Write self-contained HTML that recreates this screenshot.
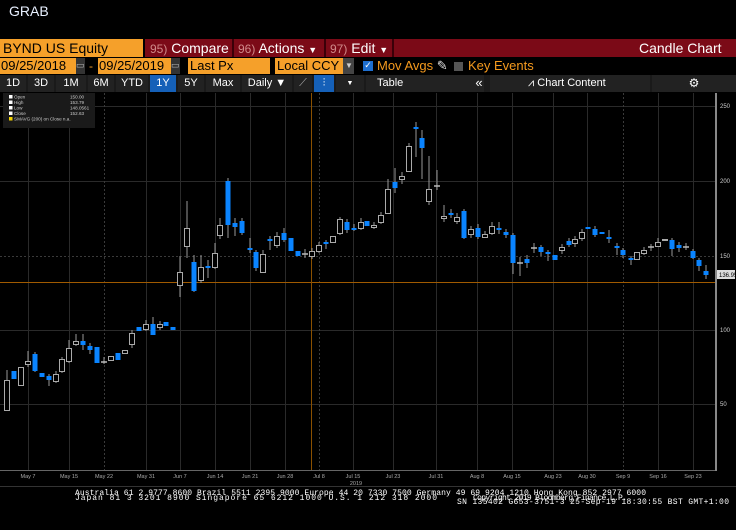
<!DOCTYPE html>
<html><head><meta charset="utf-8">
<style>
*{margin:0;padding:0;box-sizing:border-box}
body{width:736px;height:530px;background:#000;overflow:hidden;position:relative;font-family:"Liberation Sans",sans-serif;color:#fff}
.a{position:absolute;white-space:nowrap;line-height:1}
.t{font-size:14px}
.or{background:#f5a02a;color:#000}
.red{background:#7b0a17}
.dk{background:#222;color:#fff;font-size:11px;text-align:center;height:17px;top:75px;padding-top:3px}
.num{color:#d08a8a;font-size:12px}
</style></head><body>
<div class="a" style="left:9px;top:4px;font-size:14px;color:#e8f0ff">GRAB</div>

<!-- row1 -->
<div class="a or t" style="left:0;top:39px;width:143px;height:18px;padding:2px 0 0 3px">BYND US Equity</div>
<div class="a red" style="left:145px;top:39px;width:591px;height:18px"></div>
<div class="a t" style="left:150px;top:41px"><span class="num">95)</span> Compare</div>
<div class="a" style="left:232px;top:39px;width:2px;height:18px;background:#3a0008"></div>
<div class="a t" style="left:238px;top:41px"><span class="num">96)</span> Actions <span style="font-size:9px">▼</span></div>
<div class="a" style="left:324px;top:39px;width:2px;height:18px;background:#3a0008"></div>
<div class="a t" style="left:330px;top:41px"><span class="num">97)</span> Edit <span style="font-size:9px">▼</span></div>
<div class="a" style="left:392px;top:39px;width:2px;height:18px;background:#3a0008"></div>
<div class="a t" style="left:639px;top:41px">Candle Chart</div>

<!-- row2 -->
<div class="a or t" style="left:0;top:58px;width:76px;height:16px;padding:1px 0 0 1px;font-size:13px">09/25/2018</div>
<div class="a" style="left:76px;top:58px;width:9px;height:16px;background:#333;color:#bbb;font-size:9px;padding-top:3px">▭</div>
<div class="a" style="left:89px;top:60px;color:#f5a02a;font-size:12px">-</div>
<div class="a or t" style="left:98px;top:58px;width:73px;height:16px;padding:1px 0 0 1px;font-size:13px">09/25/2019</div>
<div class="a" style="left:171px;top:58px;width:9px;height:16px;background:#333;color:#bbb;font-size:9px;padding-top:3px">▭</div>
<div class="a or t" style="left:188px;top:58px;width:82px;height:16px;padding:1px 0 0 2px;font-size:13px">Last Px</div>
<div class="a or t" style="left:275px;top:58px;width:68px;height:16px;padding:1px 0 0 2px;font-size:13px">Local CCY</div>
<div class="a" style="left:343px;top:58px;width:11px;height:16px;background:#444;color:#ccc;font-size:8px;padding:4px 0 0 2px">▼</div>
<div class="a" style="left:363px;top:61px;width:10px;height:10px;background:#1e6fd0;color:#fff;font-size:9px;text-align:center">✓</div>
<div class="a" style="left:377px;top:59px;color:#f59a1e;font-size:13px">Mov Avgs <span style="color:#ddd">✎</span></div>
<div class="a" style="left:454px;top:62px;width:9px;height:9px;background:#555"></div>
<div class="a" style="left:468px;top:59px;color:#f59a1e;font-size:13px">Key Events</div>

<!-- row3 -->
<div class="a" style="left:0;top:75px;width:736px;height:17px;background:#1a1a1a"></div>
<div class="a dk" style="left:0;width:26px">1D</div>
<div class="a dk" style="left:28px;width:26px">3D</div>
<div class="a dk" style="left:56px;width:30px">1M</div>
<div class="a dk" style="left:88px;width:26px">6M</div>
<div class="a dk" style="left:116px;width:32px">YTD</div>
<div class="a dk" style="left:150px;width:26px;background:#1560b8">1Y</div>
<div class="a dk" style="left:178px;width:26px">5Y</div>
<div class="a dk" style="left:206px;width:34px">Max</div>
<div class="a dk" style="left:242px;width:50px">Daily ▼</div>
<div class="a dk" style="left:294px;width:18px;color:#aaa">⟋</div>
<div class="a dk" style="left:314px;width:20px;background:#1560b8">⫶</div>
<div class="a dk" style="left:336px;width:28px;font-size:7px;padding-top:5px">▼</div>
<div class="a dk" style="left:366px;width:118px;text-align:left;padding-left:11px">Table</div>
<div class="a dk" style="left:470px;width:18px;font-size:13px;padding-top:1px;background:transparent">«</div>
<div class="a dk" style="left:490px;width:160px;text-align:left;padding-left:38px">⩘ Chart Content</div>
<div class="a dk" style="left:652px;width:84px;font-size:12px;padding-top:2px">⚙</div>

<svg class="a" style="left:0;top:93px" width="736" height="437" viewBox="0 93 736 437">
<g stroke="#2a2a2a" stroke-width="1">
<line x1="0" y1="106.5" x2="715" y2="106.5"/><line x1="0" y1="181.5" x2="715" y2="181.5"/>
<line x1="0" y1="256.5" x2="715" y2="256.5" stroke-dasharray="2,2" stroke="#3a3a3a"/>
<line x1="0" y1="330.5" x2="715" y2="330.5"/><line x1="0" y1="404.5" x2="715" y2="404.5"/>
<line x1="28.5" y1="93" x2="28.5" y2="470"/><line x1="69.5" y1="93" x2="69.5" y2="470"/>
<line x1="104.5" y1="93" x2="104.5" y2="470" stroke-dasharray="2,2" stroke="#3a3a3a"/>
<line x1="146.5" y1="93" x2="146.5" y2="470"/><line x1="180.5" y1="93" x2="180.5" y2="470"/>
<line x1="215.5" y1="93" x2="215.5" y2="470"/><line x1="250.5" y1="93" x2="250.5" y2="470"/>
<line x1="285.5" y1="93" x2="285.5" y2="470"/>
<line x1="319.5" y1="93" x2="319.5" y2="470" stroke-dasharray="2,2" stroke="#3a3a3a"/>
<line x1="353.5" y1="93" x2="353.5" y2="470"/><line x1="393.5" y1="93" x2="393.5" y2="470"/>
<line x1="436.5" y1="93" x2="436.5" y2="470"/><line x1="477.5" y1="93" x2="477.5" y2="470"/>
<line x1="512.5" y1="93" x2="512.5" y2="470"/><line x1="553.5" y1="93" x2="553.5" y2="470"/>
<line x1="587.5" y1="93" x2="587.5" y2="470"/>
<line x1="623.5" y1="93" x2="623.5" y2="470" stroke-dasharray="2,2" stroke="#3a3a3a"/>
<line x1="658.5" y1="93" x2="658.5" y2="470"/><line x1="693.5" y1="93" x2="693.5" y2="470"/>
</g>
<line x1="0" y1="282.5" x2="715" y2="282.5" stroke="#a05a00"/>
<line x1="311.5" y1="93" x2="311.5" y2="470" stroke="#8a5000"/>
<line x1="0" y1="470.5" x2="716" y2="470.5" stroke="#666"/>
<line x1="716" y1="93" x2="716" y2="471" stroke="#888" stroke-width="2"/>
<g fill="#ccc" font-size="6" font-family="Liberation Sans">
<text x="720" y="108">250</text><text x="720" y="183">200</text><text x="720" y="258">150</text><text x="720" y="332">100</text><text x="720" y="406">50</text>
</g>
<rect x="717" y="270" width="18" height="9" fill="#ddd"/><text x="719" y="277" font-size="6" fill="#000" font-family="Liberation Sans">136.95</text>

<!-- wicks -->
<g stroke="#999" stroke-width="1">
<line x1="7" y1="370" x2="7" y2="410"/><line x1="28" y1="351" x2="28" y2="367"/><line x1="35" y1="352" x2="35" y2="372"/>
<line x1="49" y1="374" x2="49" y2="386"/><line x1="56" y1="371" x2="56" y2="383"/><line x1="62" y1="357" x2="62" y2="373"/>
<line x1="69" y1="340" x2="69" y2="363"/><line x1="76" y1="334" x2="76" y2="346"/><line x1="83" y1="334" x2="83" y2="350"/><line x1="90" y1="343" x2="90" y2="354"/>
<line x1="104" y1="357" x2="104" y2="364"/><line x1="132" y1="330" x2="132" y2="348"/><line x1="146" y1="320" x2="146" y2="331"/><line x1="153" y1="317" x2="153" y2="335"/><line x1="160" y1="321" x2="160" y2="330"/>
<line x1="180" y1="256" x2="180" y2="297"/><line x1="187" y1="201" x2="187" y2="258"/><line x1="194" y1="255" x2="194" y2="292"/><line x1="201" y1="255" x2="201" y2="283"/><line x1="208" y1="260" x2="208" y2="278"/><line x1="215" y1="243" x2="215" y2="269"/>
<line x1="220" y1="218" x2="220" y2="239"/><line x1="228" y1="178" x2="228" y2="238"/><line x1="235" y1="218" x2="235" y2="236"/><line x1="242" y1="218" x2="242" y2="235"/>
<line x1="250" y1="238" x2="250" y2="253"/><line x1="256" y1="250" x2="256" y2="271"/><line x1="263" y1="250" x2="263" y2="273"/><line x1="270" y1="236" x2="270" y2="250"/><line x1="277" y1="232" x2="277" y2="248"/><line x1="284" y1="228" x2="284" y2="242"/>
<line x1="305" y1="249" x2="305" y2="258"/><line x1="312" y1="248" x2="312" y2="259"/><line x1="319" y1="242" x2="319" y2="253"/><line x1="326" y1="240" x2="326" y2="249"/>
<line x1="340" y1="217" x2="340" y2="235"/><line x1="347" y1="219" x2="347" y2="233"/><line x1="354" y1="224" x2="354" y2="231"/><line x1="361" y1="218" x2="361" y2="230"/><line x1="374" y1="222" x2="374" y2="229"/><line x1="381" y1="212" x2="381" y2="224"/>
<line x1="388" y1="179" x2="388" y2="214"/><line x1="395" y1="168" x2="395" y2="193"/><line x1="402" y1="172" x2="402" y2="184"/><line x1="409" y1="143" x2="409" y2="172"/>
<line x1="416" y1="122" x2="416" y2="157"/><line x1="422" y1="130" x2="422" y2="179"/><line x1="429" y1="156" x2="429" y2="205"/><line x1="437" y1="170" x2="437" y2="190"/>
<line x1="444" y1="205" x2="444" y2="222"/><line x1="451" y1="209" x2="451" y2="218"/><line x1="457" y1="213" x2="457" y2="224"/><line x1="464" y1="209" x2="464" y2="239"/><line x1="471" y1="226" x2="471" y2="238"/><line x1="478" y1="224" x2="478" y2="239"/>
<line x1="485" y1="231" x2="485" y2="238"/><line x1="492" y1="222" x2="492" y2="235"/><line x1="499" y1="222" x2="499" y2="234"/><line x1="506" y1="229" x2="506" y2="238"/>
<line x1="513" y1="233" x2="513" y2="274"/><line x1="520" y1="257" x2="520" y2="276"/><line x1="527" y1="255" x2="527" y2="268"/><line x1="534" y1="243" x2="534" y2="253"/><line x1="541" y1="245" x2="541" y2="256"/><line x1="548" y1="250" x2="548" y2="261"/>
<line x1="562" y1="244" x2="562" y2="254"/><line x1="569" y1="238" x2="569" y2="247"/><line x1="575" y1="236" x2="575" y2="247"/><line x1="582" y1="229" x2="582" y2="241"/>
<line x1="595" y1="226" x2="595" y2="237"/><line x1="609" y1="230" x2="609" y2="243"/><line x1="617" y1="243" x2="617" y2="255"/><line x1="623" y1="248" x2="623" y2="258"/><line x1="631" y1="256" x2="631" y2="265"/>
<line x1="644" y1="247" x2="644" y2="255"/><line x1="651" y1="244" x2="651" y2="251"/><line x1="658" y1="238" x2="658" y2="247"/><line x1="672" y1="238" x2="672" y2="256"/><line x1="679" y1="242" x2="679" y2="252"/><line x1="686" y1="243" x2="686" y2="250"/>
<line x1="693" y1="249" x2="693" y2="259"/><line x1="699" y1="258" x2="699" y2="271"/><line x1="706" y1="265" x2="706" y2="279"/>
</g>
<!-- hollow bodies -->
<g fill="#000" stroke="#aaa" stroke-width="1">
<rect x="4.5" y="380.5" width="5" height="30"/><rect x="18.5" y="367.5" width="5" height="18"/><rect x="25.5" y="361.5" width="5" height="3"/>
<rect x="53.5" y="374.5" width="5" height="7"/><rect x="59.5" y="359.5" width="5" height="12"/><rect x="66.5" y="348.5" width="5" height="13"/><rect x="73.5" y="341.5" width="5" height="3"/>
<rect x="108.5" y="356.5" width="5" height="4"/><rect x="122.5" y="350.5" width="5" height="3"/><rect x="129.5" y="333.5" width="5" height="11"/><rect x="143.5" y="324.5" width="5" height="5"/><rect x="157.5" y="324.5" width="5" height="3"/>
<rect x="177.5" y="272.5" width="5" height="13"/><rect x="184.5" y="228.5" width="5" height="18"/><rect x="198.5" y="267.5" width="5" height="13"/><rect x="212.5" y="253.5" width="5" height="14"/><rect x="217.5" y="225.5" width="5" height="10"/>
<rect x="260.5" y="254.5" width="5" height="18"/><rect x="274.5" y="236.5" width="5" height="9"/><rect x="309.5" y="251.5" width="5" height="5"/><rect x="316.5" y="245.5" width="5" height="6"/>
<rect x="330.5" y="236.5" width="5" height="6"/><rect x="337.5" y="219.5" width="5" height="14"/><rect x="358.5" y="222.5" width="5" height="6"/><rect x="371.5" y="225.5" width="5" height="2"/><rect x="378.5" y="215.5" width="5" height="7"/>
<rect x="385.5" y="189.5" width="5" height="24"/><rect x="399.5" y="176.5" width="5" height="3"/><rect x="406.5" y="146.5" width="5" height="25"/><rect x="426.5" y="189.5" width="5" height="12"/>
<rect x="441.5" y="216.5" width="5" height="2"/><rect x="454.5" y="217.5" width="5" height="4"/><rect x="468.5" y="229.5" width="5" height="5"/>
<rect x="482.5" y="234.5" width="5" height="3"/><rect x="489.5" y="226.5" width="5" height="7"/><rect x="559.5" y="247.5" width="5" height="3"/><rect x="572.5" y="239.5" width="5" height="4"/><rect x="579.5" y="232.5" width="5" height="6"/>
<rect x="634.5" y="252.5" width="5" height="7"/><rect x="641.5" y="250.5" width="5" height="3"/><rect x="655.5" y="242.5" width="5" height="4"/><rect x="662.5" y="239.5" width="5" height="1"/>
</g>
<!-- dashes (neutral) -->
<g stroke="#bbb" stroke-width="1.5">
<line x1="101" y1="362" x2="107" y2="362"/><line x1="302" y1="254" x2="308" y2="254"/><line x1="434" y1="186" x2="440" y2="186"/><line x1="517" y1="263" x2="523" y2="263"/><line x1="531" y1="248" x2="537" y2="248"/><line x1="683" y1="247" x2="689" y2="247"/><line x1="648" y1="247" x2="654" y2="247"/>
</g>
<!-- blue bodies -->
<g fill="#0a84ff">
<rect x="11.5" y="371" width="5" height="8"/><rect x="32.5" y="354" width="5" height="17"/><rect x="39.5" y="373" width="5" height="4"/><rect x="46.5" y="376" width="5" height="4"/>
<rect x="80.5" y="341" width="5" height="4"/><rect x="87.5" y="346" width="5" height="4"/><rect x="94.5" y="347" width="5" height="16"/><rect x="115.5" y="353" width="5" height="7"/>
<rect x="136.5" y="327" width="5" height="4"/><rect x="150.5" y="324" width="5" height="11"/><rect x="163.5" y="322" width="5" height="4"/><rect x="170.5" y="327" width="5" height="3"/>
<rect x="191.5" y="262" width="5" height="29"/><rect x="205.5" y="266" width="5" height="2"/><rect x="225.5" y="181" width="5" height="44"/><rect x="232.5" y="223" width="5" height="4"/>
<rect x="239.5" y="221" width="5" height="12"/><rect x="247.5" y="248" width="5" height="2"/><rect x="253.5" y="252" width="5" height="16"/><rect x="267.5" y="239" width="5" height="2"/>
<rect x="281.5" y="233" width="5" height="7"/><rect x="288.5" y="238" width="5" height="13"/><rect x="295.5" y="251" width="5" height="5"/><rect x="323.5" y="242" width="5" height="2"/>
<rect x="344.5" y="222" width="5" height="8"/><rect x="351.5" y="228" width="5" height="2"/><rect x="364.5" y="221" width="5" height="5"/><rect x="392.5" y="182" width="5" height="6"/>
<rect x="413.5" y="127" width="5" height="2"/><rect x="419.5" y="138" width="5" height="10"/><rect x="448.5" y="213" width="5" height="2"/><rect x="461.5" y="211" width="5" height="27"/><rect x="475.5" y="228" width="5" height="9"/>
<rect x="496.5" y="228" width="5" height="2"/><rect x="503.5" y="232" width="5" height="3"/><rect x="510.5" y="235" width="5" height="28"/><rect x="524.5" y="259" width="5" height="4"/>
<rect x="538.5" y="247" width="5" height="5"/><rect x="545.5" y="252" width="5" height="2"/><rect x="552.5" y="255" width="5" height="5"/><rect x="566.5" y="241" width="5" height="4"/>
<rect x="585.5" y="227" width="5" height="2"/><rect x="592.5" y="229" width="5" height="6"/><rect x="599.5" y="232" width="5" height="2"/><rect x="606.5" y="237" width="5" height="2"/>
<rect x="614.5" y="246" width="5" height="2"/><rect x="620.5" y="250" width="5" height="5"/><rect x="628.5" y="258" width="5" height="2"/><rect x="669.5" y="240" width="5" height="9"/>
<rect x="676.5" y="245" width="5" height="3"/><rect x="690.5" y="251" width="5" height="7"/><rect x="696.5" y="260" width="5" height="6"/><rect x="703.5" y="271" width="5" height="4"/>
</g>

<!-- legend -->
<rect x="3" y="93" width="92" height="35" fill="#1a1a1a"/>
<g font-size="4.6" fill="#ccc" font-family="Liberation Sans">
<rect x="9" y="95" width="3.5" height="3.5" fill="#fff"/><text x="14" y="98.5">Open</text><text x="70" y="98.5">150.00</text>
<rect x="9" y="100.5" width="3.5" height="3.5" fill="#fff"/><text x="14" y="104">High</text><text x="70" y="104">153.79</text>
<rect x="9" y="106" width="3.5" height="3.5" fill="#fff"/><text x="14" y="109.5">Low</text><text x="70" y="109.5">148.0561</text>
<rect x="9" y="111.5" width="3.5" height="3.5" fill="#fff"/><text x="14" y="115">Close</text><text x="70" y="115">152.63</text>
<rect x="9" y="117" width="3.5" height="3.5" fill="#f0d000"/><text x="14" y="120.5">SMAVG (200)   on Close  n.a.</text>
</g>

<!-- x axis -->
<g font-size="5.5" fill="#aaa" font-family="Liberation Sans" text-anchor="middle">
<text x="28" y="478">May 7</text><text x="69" y="478">May 15</text><text x="104" y="478">May 22</text><text x="146" y="478">May 31</text><text x="180" y="478">Jun 7</text>
<text x="215" y="478">Jun 14</text><text x="250" y="478">Jun 21</text><text x="285" y="478">Jun 28</text><text x="319" y="478">Jul 8</text><text x="353" y="478">Jul 15</text>
<text x="393" y="478">Jul 23</text><text x="436" y="478">Jul 31</text><text x="477" y="478">Aug 8</text><text x="512" y="478">Aug 15</text><text x="553" y="478">Aug 23</text>
<text x="587" y="478">Aug 30</text><text x="623" y="478">Sep 9</text><text x="658" y="478">Sep 16</text><text x="693" y="478">Sep 23</text>
<text x="356" y="485">2019</text>
</g>
<line x1="0" y1="486.5" x2="736" y2="486.5" stroke="#333"/>
<g font-size="8" fill="#fff" font-family="Liberation Mono">
<text x="75" y="495" textLength="571">Australia 61 2 9777 8600 Brazil 5511 2395 9000 Europe 44 20 7330 7500 Germany 49 69 9204 1210 Hong Kong 852 2977 6000</text>
<text x="75" y="500" textLength="362">Japan 81 3 3201 8900       Singapore 65 6212 1000       U.S. 1 212 318 2000</text>
<text x="473" y="500" textLength="154">Copyright 2019 Bloomberg Finance L.P.</text>
<text x="457" y="504" textLength="272">SN 135402 G653-3751-3 25-Sep-19 18:30:55 BST  GMT+1:00</text>
</g>
</svg>
</body></html>
